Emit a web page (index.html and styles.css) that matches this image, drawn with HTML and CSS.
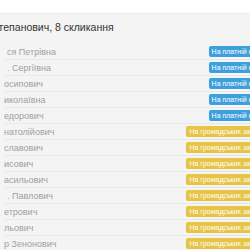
FILE: index.html
```html
<!DOCTYPE html>
<html lang="uk">
<head>
<meta charset="utf-8">
<link rel="stylesheet" href="styles.css">
</head>
<body>
<div class="topbar"></div>
<div class="panel">
  <h2 class="title">Степанович, 8 скликання</h2>
  <ul class="list">
    <li class="row"><span class="name indent">ся Петрівна</span><span class="badge paid">На платній основі</span></li>
    <li class="row"><span class="name indent">. Сергіївна</span><span class="badge paid">На платній основі</span></li>
    <li class="row"><span class="name">осипович</span><span class="badge paid">На платній основі</span></li>
    <li class="row"><span class="name">иколаївна</span><span class="badge paid">На платній основі</span></li>
    <li class="row"><span class="name">едорович</span><span class="badge paid">На платній основі</span></li>
    <li class="row"><span class="name">натолійович</span><span class="badge civic">На громадських засадах</span></li>
    <li class="row"><span class="name">славович</span><span class="badge civic">На громадських засадах</span></li>
    <li class="row"><span class="name">исович</span><span class="badge civic">На громадських засадах</span></li>
    <li class="row"><span class="name">асильович</span><span class="badge civic">На громадських засадах</span></li>
    <li class="row"><span class="name indent">. Павлович</span><span class="badge civic">На громадських засадах</span></li>
    <li class="row"><span class="name">етрович</span><span class="badge civic">На громадських засадах</span></li>
    <li class="row"><span class="name">льович</span><span class="badge civic">На громадських засадах</span></li>
    <li class="row"><span class="name">р Зенонович</span><span class="badge civic">На громадських засадах</span></li>
  </ul>
</div>
</body>
</html>
```
FILE: styles.css
```css
html, body {
  margin: 0;
  padding: 0;
  width: 250px;
  height: 250px;
  overflow: hidden;
  background: #f4f4f4;
  font-family: "Liberation Sans", Arial, sans-serif;
}
.topbar {
  height: 13px;
  background: #ffffff;
  border-bottom: 1px solid #ececec;
}
.panel {
  margin-left: -6px;
  width: 278px;
}
.title {
  margin: 0 0 0 -3px;
  height: 30px;
  line-height: 26px;
  font-size: 10.5px;
  font-weight: normal;
  color: #333333;
  white-space: nowrap;
}
.list {
  list-style: none;
  margin: 0;
  padding: 0 0 0 10px;
}
.row {
  display: flex;
  align-items: center;
  justify-content: space-between;
  height: 15px;
  border-bottom: 1px solid #e8e8e8;
}
.name {
  font-size: 9px;
  color: #a0a0a0;
  white-space: nowrap;
}
.indent {
  padding-left: 3px;
}
.badge {
  font-size: 7px;
  line-height: 11px;
  padding: 0 3px;
  border-radius: 2px;
  color: #ffffff;
  white-space: nowrap;
}
.paid {
  background: #3d9fdb;
}
.civic {
  background: #e7c446;
}
```
